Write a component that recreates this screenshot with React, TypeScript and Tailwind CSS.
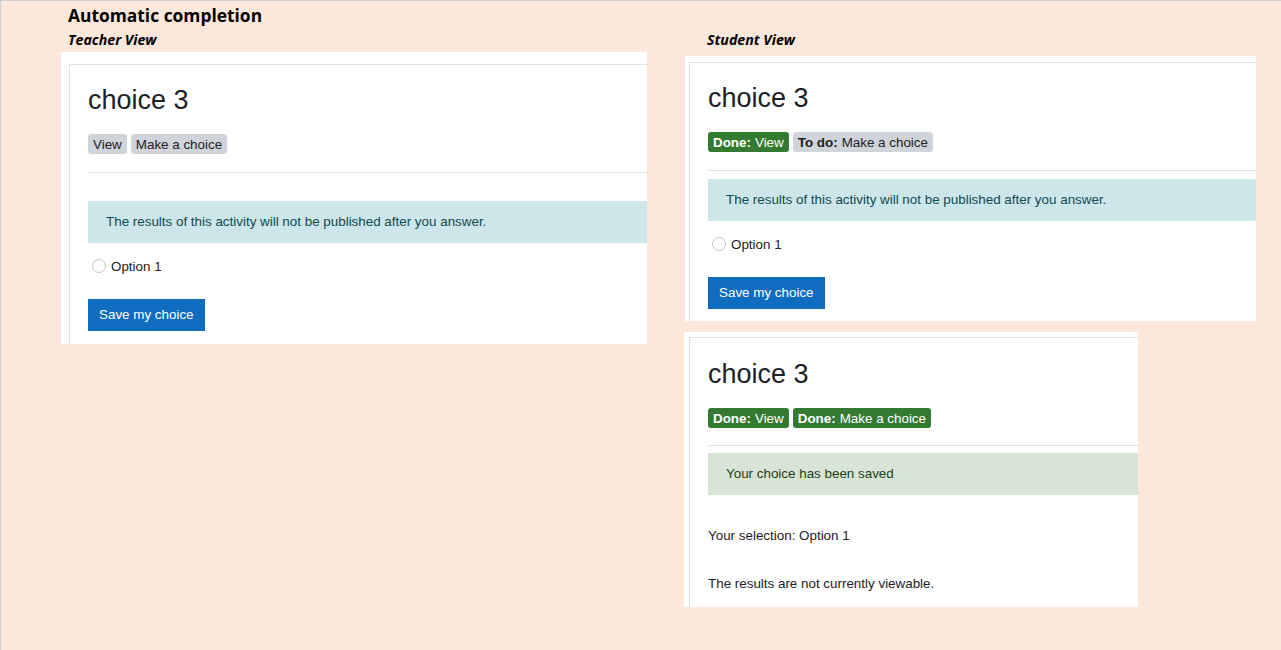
import React from "react";

const ui = { fontFamily: '"Liberation Sans", Arial, sans-serif' };
const head = { fontFamily: '"Open Sans", Lato, sans-serif' };

function Badge({ label, text, done }: { label?: string; text: string; done?: boolean }) {
  return (
    <span
      className={`inline-flex items-center h-[20px] px-[5px] pt-px rounded-[3px] text-[13.4px] leading-none ${
        done ? "bg-[#357a32] text-white" : "bg-[#ced4da] text-[#1d2125]"
      }`}
    >
      {label && <b className="font-bold mr-[4px]">{label}</b>}
      {text}
    </span>
  );
}

function Title() {
  return <h2 className="text-[27px] leading-[32px] pt-px text-[#1d2125] font-normal">choice 3</h2>;
}

function Hr({ mt }: { mt: string }) {
  return <div className={`h-px bg-[#dee2e6] ${mt}`} />;
}

function OptionRow({ mt }: { mt: string }) {
  return (
    <div className={`flex items-center h-[20px] text-[13.4px] text-[#1d2125] ${mt}`}>
      <span className="ml-[4px] mr-[5px] -mt-[2px] w-[14px] h-[14px] rounded-full border border-[#c4c4c4] bg-white" />
      <span className="pt-px">Option 1</span>
    </div>
  );
}

function SaveButton({ mt }: { mt: string }) {
  return (
    <button className={`h-[32px] px-[11px] pt-px bg-[#0f6cbf] text-white text-[13.4px] ${mt}`}>
      Save my choice
    </button>
  );
}

export default function App() {
  return (
    <div className="w-[1281px] h-[650px] bg-[#fce8da] border-t border-l border-[#cfcfcf] overflow-hidden" style={ui}>
      <h1 className="pl-[67px] pt-[2px] text-[17.4px] leading-[24px] font-bold text-black" style={head}>
        Automatic completion
      </h1>
      <div className="flex">
        {/* Teacher view */}
        <div className="ml-[60px] w-[586px]">
          <p className="mt-[5px] mb-[4px] ml-[7px] text-[14.2px] leading-[16px] font-bold italic text-black" style={head}>
            Teacher View
          </p>
          <div className="bg-white pt-[12px] pl-[8px] overflow-hidden">
            <div className="border-t border-l border-[#dee2e6] pl-[18px] pt-[18px] pb-[13px]">
              <Title />
              <div className="flex gap-[4px] mt-[18px]">
                <Badge text="View" />
                <Badge text="Make a choice" />
              </div>
              <Hr mt="mt-[18px]" />
              <div className="mt-[28px] h-[42px] flex items-center pl-[18px] pt-px bg-[#cce6ea] text-[#0f4a51] text-[13.4px] whitespace-nowrap">
                The results of this activity will not be published after you answer.
              </div>
              <OptionRow mt="mt-[14px]" />
              <SaveButton mt="mt-[22px]" />
            </div>
          </div>
        </div>

        {/* Student view */}
        <div className="ml-[38px]">
          <p className="mt-[5px] mb-[8px] ml-[22px] text-[14.2px] leading-[16px] font-bold italic text-black" style={head}>
            Student View
          </p>
          <div className="w-[571px] bg-white pt-[6px] pl-[4px] overflow-hidden">
            <div className="border-t border-l border-[#dee2e6] pl-[18px] pt-[18px] pb-[12px]">
              <Title />
              <div className="flex gap-[4px] mt-[18px]">
                <Badge label="Done:" text="View" done />
                <Badge label="To do:" text="Make a choice" />
              </div>
              <Hr mt="mt-[18px]" />
              <div className="mt-[8px] h-[42px] flex items-center pl-[18px] pt-px bg-[#cce6ea] text-[#0f4a51] text-[13.4px] whitespace-nowrap">
                The results of this activity will not be published after you answer.
              </div>
              <OptionRow mt="mt-[14px]" />
              <SaveButton mt="mt-[22px]" />
            </div>
          </div>

          <div className="w-[454px] -ml-px mt-[11px] bg-white pt-[5px] pl-[5px] overflow-hidden">
            <div className="border-t border-l border-[#dee2e6] pl-[18px] pt-[19px] pb-[13px]">
              <Title />
              <div className="flex gap-[4px] mt-[18px]">
                <Badge label="Done:" text="View" done />
                <Badge label="Done:" text="Make a choice" done />
              </div>
              <Hr mt="mt-[17px]" />
              <div className="mt-[7px] h-[42px] flex items-center pl-[18px] pt-px bg-[#d7e4d6] text-[#1c3f1a] text-[13.4px] whitespace-nowrap">
                Your choice has been saved
              </div>
              <p className="mt-[30px] pt-px text-[13.4px] leading-[20px] text-[#1d2125]">Your selection: Option 1</p>
              <p className="mt-[27px] pt-px text-[13.4px] leading-[20px] text-[#1d2125]">The results are not currently viewable.</p>
            </div>
          </div>
        </div>
      </div>
    </div>
  );
}
